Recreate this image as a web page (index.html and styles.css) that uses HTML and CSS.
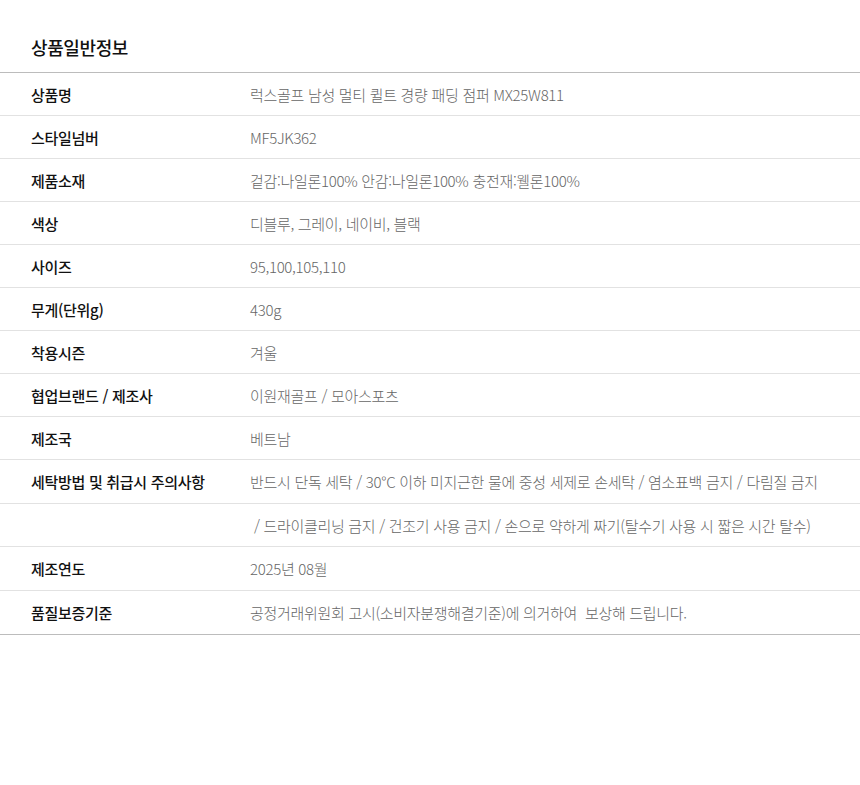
FILE: index.html
```html
<!DOCTYPE html>
<html lang="ko">
<head>
<meta charset="utf-8">
<link rel="stylesheet" href="styles.css">
</head>
<body>
<div class="info">
  <h2 class="title">상품일반정보</h2>
  <div class="table">
    <div class="row"><div class="label">상품명</div><div class="value">럭스골프 남성 멀티 퀼트 경량 패딩 점퍼 MX25W811</div></div>
    <div class="row"><div class="label">스타일넘버</div><div class="value">MF5JK362</div></div>
    <div class="row"><div class="label">제품소재</div><div class="value">겉감:나일론100% 안감:나일론100% 충전재:웰론100%</div></div>
    <div class="row"><div class="label">색상</div><div class="value">디블루, 그레이, 네이비, 블랙</div></div>
    <div class="row"><div class="label">사이즈</div><div class="value">95,100,105,110</div></div>
    <div class="row"><div class="label">무게(단위g)</div><div class="value">430g</div></div>
    <div class="row"><div class="label">착용시즌</div><div class="value">겨울</div></div>
    <div class="row"><div class="label">협업브랜드 / 제조사</div><div class="value">이원재골프 / 모아스포츠</div></div>
    <div class="row"><div class="label">제조국</div><div class="value">베트남</div></div>
    <div class="row tall"><div class="label">세탁방법 및 취급시 주의사항</div><div class="value">반드시 단독 세탁 / 30°C 이하 미지근한 물에 중성 세제로 손세탁 / 염소표백 금지 / 다림질 금지</div></div>
    <div class="row"><div class="label"></div><div class="value">&nbsp;/ 드라이클리닝 금지 / 건조기 사용 금지 / 손으로 약하게 짜기(탈수기 사용 시 짧은 시간 탈수)</div></div>
    <div class="row tall"><div class="label">제조연도</div><div class="value">2025년 08월</div></div>
    <div class="row tall last"><div class="label">품질보증기준</div><div class="value">공정거래위원회 고시(소비자분쟁해결기준)에 의거하여&nbsp; 보상해 드립니다.</div></div>
  </div>
</div>
</body>
</html>
```
FILE: styles.css
```css
html, body {
  margin: 0;
  padding: 0;
  background: #fff;
}
body {
  font-family: "Noto Sans CJK KR", "Noto Sans", sans-serif;
  width: 860px;
}
.info {
  padding-top: 34px;
}
.title {
  margin: 0;
  padding: 0 0 0 31px;
  font-size: 18px;
  font-weight: 500;
  line-height: 26px;
  height: 38px;
  color: #111;
  letter-spacing: -0.4px;
}
.table {
  border-top: 1px solid #bcbcbc;
  border-bottom: 1px solid #bcbcbc;
}
.row {
  display: flex;
  align-items: center;
  height: 42px;
  border-bottom: 1px solid #e2e2e2;
}
.row.tall {
  height: 43px;
}
.row.last {
  border-bottom: none;
}
.label {
  width: 219px;
  padding-left: 31px;
  flex: none;
  font-size: 15px;
  font-weight: 500;
  color: #111;
  letter-spacing: -0.3px;
}
.value {
  font-size: 15px;
  font-weight: 300;
  color: #666;
  letter-spacing: -0.3px;
  white-space: nowrap;
}
```
